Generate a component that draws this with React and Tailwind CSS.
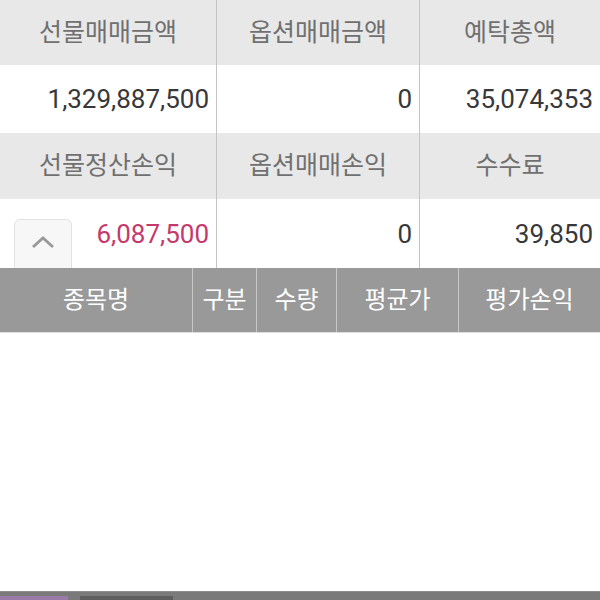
const font = { fontFamily: "Roboto, 'Noto Sans CJK KR', sans-serif" };

const summary = [
  { labels: ["선물매매금액", "옵션매매금액", "예탁총액"], values: ["1,329,887,500", "0", "35,074,353"] },
  { labels: ["선물정산손익", "옵션매매손익", "수수료"], values: ["6,087,500", "0", "39,850"] },
];

const cols = ["w-[217px]", "w-[203px]", "flex-1"];

const heads = [
  { name: "종목명", w: "w-[193px]" },
  { name: "구분", w: "w-[64px]" },
  { name: "수량", w: "w-[80px]" },
  { name: "평균가", w: "w-[122px]" },
  { name: "평가손익", w: "flex-1" },
];

function UpButton() {
  return (
    <div className="absolute left-[14px] top-[20px] w-[58px] h-[60px] rounded-t-[6px] border border-[#e2e2e2] bg-[#f7f7f7] flex justify-center pt-[14px]">
      <svg width="26" height="16" viewBox="0 0 26 16" fill="none">
        <path d="M3 13 L13 4 L23 13" stroke="#9a9a9a" strokeWidth="3" />
      </svg>
    </div>
  );
}

export default function App() {
  return (
    <div className="w-[600px] h-[600px] bg-white flex flex-col overflow-hidden" style={font}>
      {summary.map((block, bi) => (
        <div key={bi}>
          <div className={`flex bg-[#e8e8e8] ${bi === 0 ? "h-[65px]" : "h-[66px]"}`}>
            {block.labels.map((l, i) => (
              <div
                key={l}
                className={`${cols[i]} flex items-center justify-center text-[25px] text-[#707070] ${i < 2 ? "border-r border-[#c4c4c4]" : ""}`}
              >
                {l}
              </div>
            ))}
          </div>
          <div className={`flex bg-white relative ${bi === 0 ? "h-[68px]" : "h-[69px]"}`}>
            {block.values.map((v, i) => (
              <div
                key={i}
                className={`${cols[i]} flex items-center justify-end pr-[7px] pt-[1px] text-[26px] ${i < 2 ? "border-r border-[#c4c4c4]" : ""} ${bi === 1 && i === 0 ? "text-[#c5396c]" : "text-[#383838]"}`}
              >
                {v}
              </div>
            ))}
            {bi === 1 && <UpButton />}
          </div>
        </div>
      ))}
      <div className="flex h-[65px] bg-[#999999] border-b border-[#dedede] relative z-10">
        {heads.map((h, i) => (
          <div
            key={h.name}
            className={`${h.w} flex items-center justify-center text-white text-[24px] ${i < 4 ? "border-r border-[#c8c8c8]" : ""}`}
          >
            {h.name}
          </div>
        ))}
      </div>
      <div className="flex-1" />
      <div className="h-[9px] bg-[#7a7a7a] border-t border-[#8c8c8c] flex items-end">
        <div className="w-[68px] h-[4px] bg-[#9a7aa6]" />
        <div className="w-[12px]" />
        <div className="w-[93px] h-[4px] bg-[#5e5e5e]" />
      </div>
    </div>
  );
}
